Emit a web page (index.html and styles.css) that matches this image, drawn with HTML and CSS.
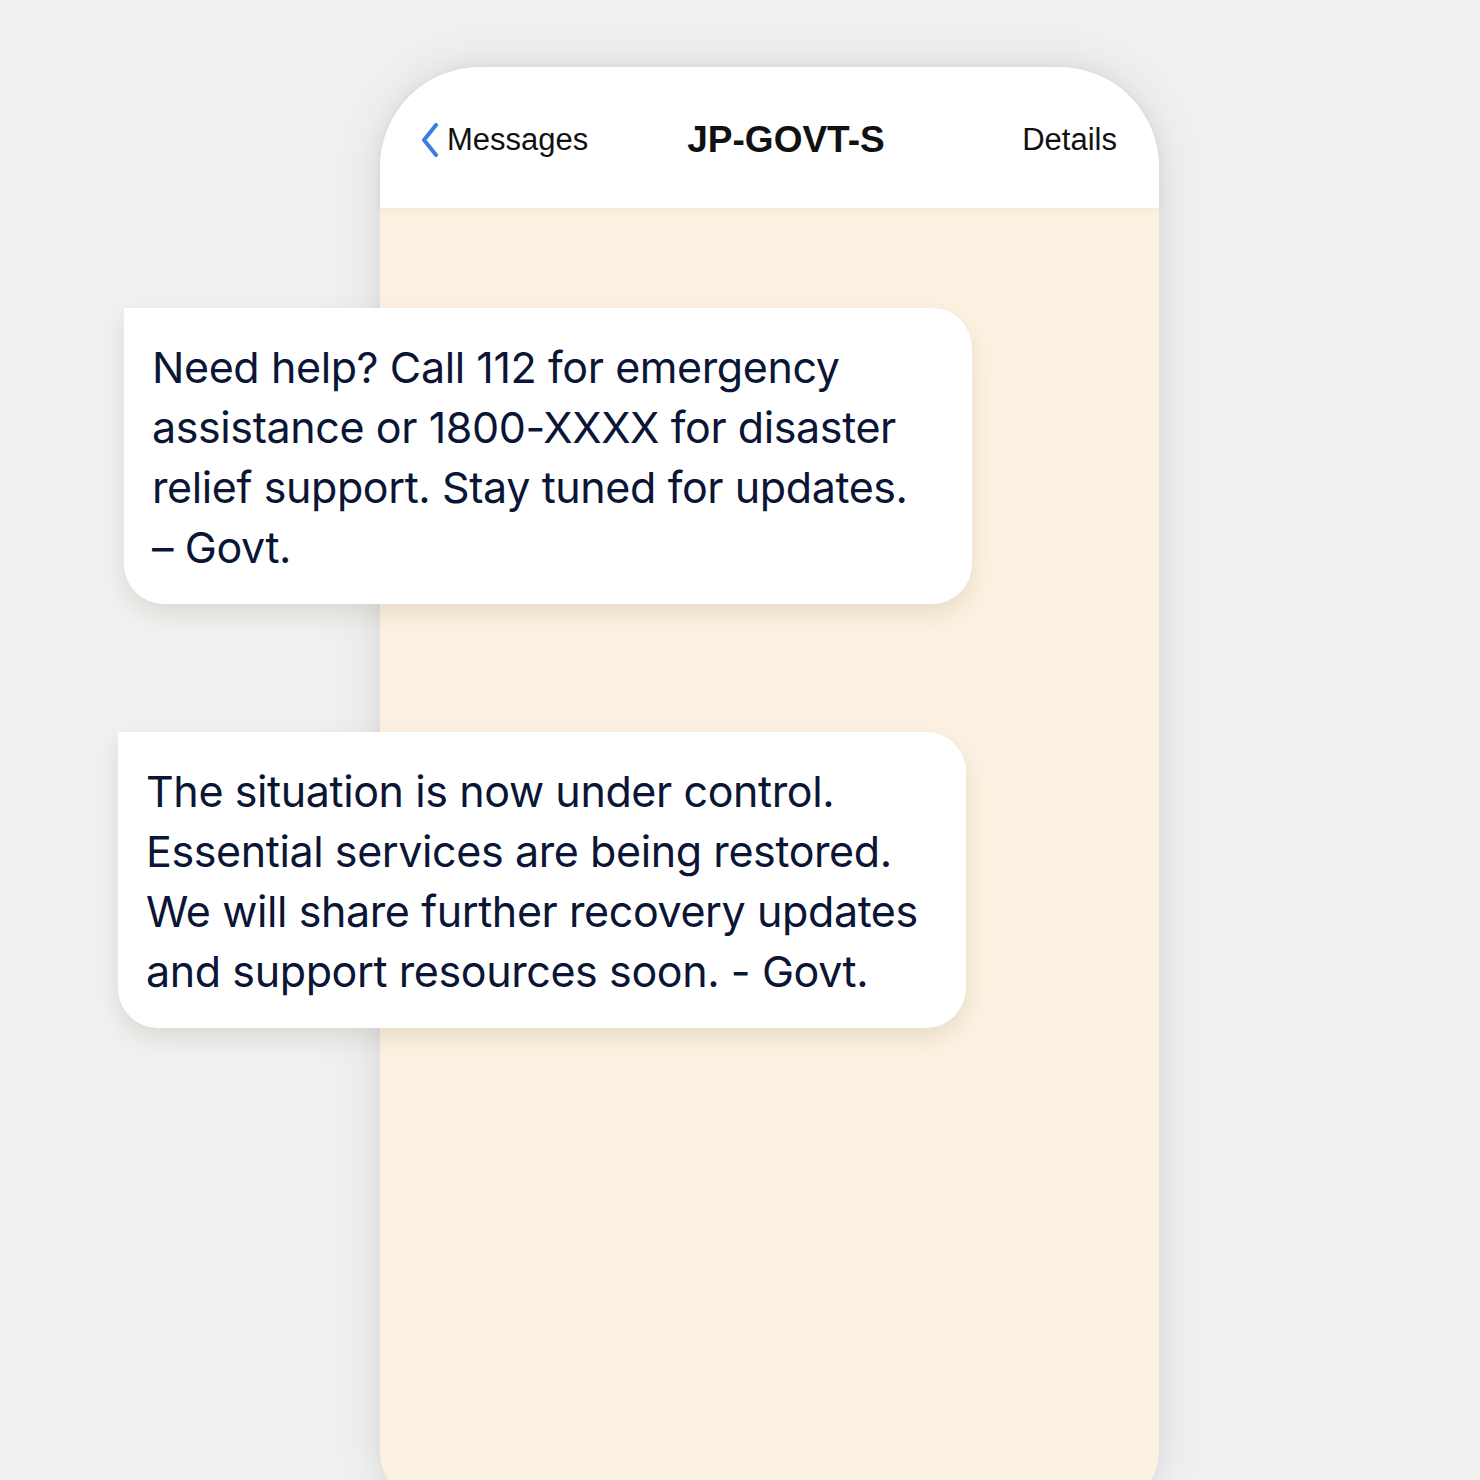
FILE: index.html
```html
<!DOCTYPE html>
<html lang="en">
<head>
  <meta charset="UTF-8">
  <title>JP-GOVT-S</title>
  <meta name="viewport" content="width=device-width, initial-scale=1.0">
  <link rel="stylesheet" href="styles.css">
</head>
<body>
  <div class="stage">
    <div class="phone">
      <div class="top-bar">
        <div class="back">
          <svg class="chevron" width="20" height="34" viewBox="0 0 20 34">
            <path d="M16 2 L4 17 L16 32" fill="none" stroke="#3b7de3" stroke-width="4" stroke-linecap="round" stroke-linejoin="round"/>
          </svg>
          <span>Messages</span>
        </div>
        <div class="sender">JP-GOVT-S</div>
        <div class="details">Details</div>
      </div>
      <div class="thread">
        <div class="bubble first">
          Need help? Call 112 for emergency<br>
          assistance or 1800-XXXX for disaster<br>
          relief support. Stay tuned for updates.<br>
          – Govt.
        </div>
        <div class="bubble second">
          The situation is now under control.<br>
          Essential services are being restored.<br>
          We will share further recovery updates<br>
          and support resources soon. - Govt.
        </div>
      </div>
    </div>
  </div>
</body>
</html>
```

FILE: styles.css
```css
html, body {
  margin: 0;
  height: 100%;
  overflow: hidden;
}
body {
  background: #f1f1f1;
  font-family: 'Liberation Sans', Arial, sans-serif;
}
.stage {
  padding-top: 67px;
  padding-left: 380px;
}
.phone {
  width: 779px;
  height: 1440px;
  background: #fdf2e2;
  border-radius: 100px 100px 56px 56px;
  box-shadow: 0 0 70px rgba(0, 0, 0, 0.08), 0 0 24px rgba(0, 0, 0, 0.06);
}
.top-bar {
  height: 141px;
  background: #fff;
  border-radius: 100px 100px 0 0;
  display: flex;
  align-items: center;
  padding: 4px 42px 0 40px;
  box-sizing: border-box;
  box-shadow: 0 2px 6px rgba(160, 140, 100, 0.12);
  position: relative;
  color: #111;
}
.back {
  display: flex;
  align-items: center;
  gap: 7px;
  font-size: 31px;
}
.chevron {
  display: block;
}
.sender {
  margin-left: 99px;
  font-size: 37px;
  font-weight: bold;
}
.details {
  margin-left: auto;
  font-size: 31px;
}
.thread {
  padding-top: 100px;
  display: flex;
  flex-direction: column;
  gap: 128px;
}
.bubble {
  width: 848px;
  box-sizing: border-box;
  background: #fff;
  border-radius: 0 40px 40px 40px;
  padding: 29px 20px 27px 28px;
  font-family: Inter, 'Noto Sans', sans-serif;
  font-size: 43px;
  line-height: 60px;
  letter-spacing: -0.4px;
  color: #0b1535;
  white-space: nowrap;
  box-shadow: 0 10px 24px rgba(120, 100, 70, 0.16);
}
.bubble.first {
  margin-left: -256px;
}
.bubble.second {
  margin-left: -262px;
}
```
